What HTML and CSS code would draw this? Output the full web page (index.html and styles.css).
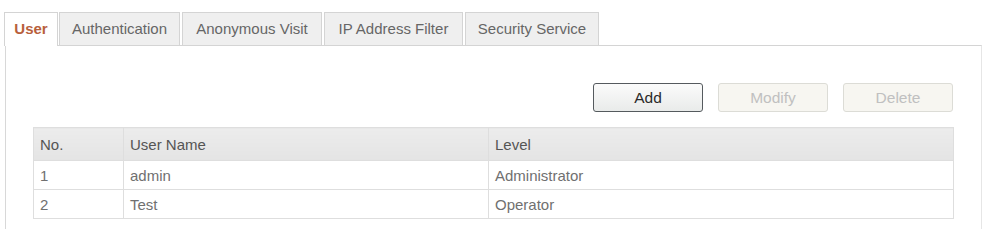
FILE: index.html
```html
<!DOCTYPE html>
<html>
<head>
<meta charset="utf-8">
<link rel="stylesheet" href="styles.css">
</head>
<body>
<div class="page">
  <div class="tabs">
    <div class="tab active tab-user">User</div>
    <div class="tab tab-auth">Authentication</div>
    <div class="tab tab-anon">Anonymous Visit</div>
    <div class="tab tab-ip">IP Address Filter</div>
    <div class="tab tab-sec">Security Service</div>
  </div>
  <div class="panel">
    <div class="actions">
      <button class="btn primary">Add</button>
      <button class="btn disabled">Modify</button>
      <button class="btn disabled">Delete</button>
    </div>
    <table class="users">
      <thead>
        <tr><th class="c-no">No.</th><th class="c-name">User Name</th><th>Level</th></tr>
      </thead>
      <tbody>
        <tr><td>1</td><td>admin</td><td>Administrator</td></tr>
        <tr><td>2</td><td>Test</td><td>Operator</td></tr>
      </tbody>
    </table>
  </div>
</div>
</body>
</html>
```
FILE: styles.css
```css
html, body {
  margin: 0;
  padding: 0;
  background: #ffffff;
  font-family: "Liberation Sans", Arial, sans-serif;
  overflow: hidden;
}

.page {
  padding: 12px 0 0 4px;
  width: 978px;
}

.tabs {
  display: flex;
  gap: 2px;
  height: 33px;
  position: relative;
  z-index: 1;
}

.tab {
  box-sizing: border-box;
  height: 33px;
  line-height: 32px;
  text-align: center;
  font-size: 15px;
  color: #666666;
  background: #efefef;
  border: 1px solid #d4d4d4;
  border-bottom: none;
}

.tab.active {
  background: #ffffff;
  color: #b8603c;
  font-weight: bold;
  height: 34px;
  margin-right: -1px;
}

.tab-user { width: 54px; }
.tab-auth { width: 121px; }
.tab-anon { width: 140px; }
.tab-ip { width: 139px; }
.tab-sec { width: 134px; }

.panel {
  margin-left: 1px;
  border-top: 1px solid #d4d4d4;
  border-left: 1px solid #d8d8d8;
  border-right: 1px solid #e6e6e6;
  padding: 37px 27px 0 27px;
  height: 184px;
  box-sizing: border-box;
}

.actions {
  display: flex;
  justify-content: flex-end;
  gap: 15px;
  padding-right: 1px;
}

.btn {
  box-sizing: border-box;
  width: 110px;
  height: 29px;
  border-radius: 3px;
  font-family: "Liberation Sans", Arial, sans-serif;
  font-size: 15.5px;
  padding: 0;
}

.btn.primary {
  border: 1px solid #555a5e;
  background: linear-gradient(#fbfbfb, #e9ebea);
  color: #2a2a2a;
}

.btn.disabled {
  border: 1px solid #dcdcd6;
  background: #f7f6f1;
  color: #c0c0c0;
}

.users {
  margin-top: 15px;
  width: 100%;
  border-collapse: collapse;
  font-size: 15px;
  color: #707070;
}

.users th, .users td {
  border: 1px solid #dedede;
  text-align: left;
  font-weight: normal;
  padding: 0 0 0 6px;
}

.users th {
  height: 32px;
  background: linear-gradient(#ececec, #e4e4e4);
  color: #555555;
}

.users td {
  height: 28px;
}

.c-no { width: 83px; }
.c-name { width: 358px; }
```
